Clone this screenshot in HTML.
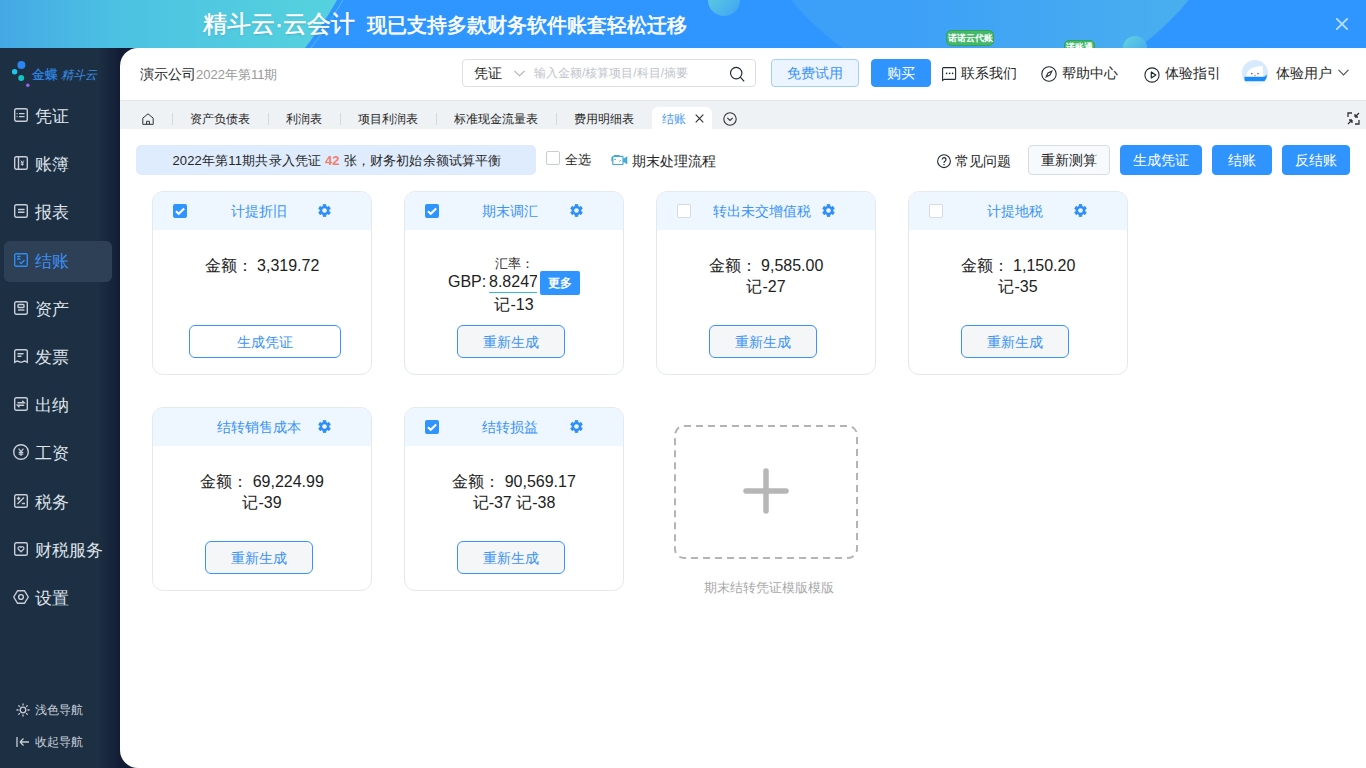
<!DOCTYPE html>
<html><head><meta charset="utf-8">
<style>
*{box-sizing:border-box;margin:0;padding:0}
html,body{width:1366px;height:768px;overflow:hidden;background:#fff;font-family:"Liberation Sans",sans-serif;color:#262626}
.abs{position:absolute}
#banner{left:0;top:0;width:1366px;height:48px;overflow:hidden;background:#3592f7}
#side{left:0;top:48px;width:140px;height:720px;background:linear-gradient(90deg,#1d2f43 0,#1d2f43 98px,#121d35 120px)}
#main{left:120px;top:48px;width:1246px;height:720px;background:#fff;border-radius:18px 0 0 18px;overflow:hidden}
.nav{position:absolute;left:0;width:120px;height:40px;color:#dfe4ea;font-size:17px;line-height:40px}
.nav .t{position:absolute;left:35px;top:1px}
.nav svg{position:absolute;left:14px;top:12px;overflow:visible}
.nav.act{left:4px;width:108px;height:41px;background:#2d4056;border-radius:6px;color:#3d8ff2}
.nav.act .t{left:31px}
.nav.act svg{left:10px}
.bot{position:absolute;left:16px;color:#c9d0d9;font-size:12px;line-height:20px}
.bot .t{position:absolute;left:19px;top:0;white-space:nowrap}
.tab{position:absolute;top:4px;height:28px;line-height:28px;font-size:12px;color:#262626;white-space:nowrap}
.sep{position:absolute;top:12px;width:1px;height:12px;background:#d5d9de}
.btn{position:absolute;height:29px;line-height:27px;font-size:14px;text-align:center;border-radius:4px;white-space:nowrap}
.bblue{background:#3094ff;color:#fff;border:1px solid #3094ff}
.card{position:absolute;width:220px;height:184px;border:1px solid #e4e9ee;border-radius:11px;overflow:hidden;background:#fff}
.card .hd{position:absolute;left:0;top:0;width:218px;height:38px;background:#eef6ff}
.card .title{position:absolute;top:0;height:38px;line-height:38px;font-size:14px;color:#3a93f7;margin-left:1px;white-space:nowrap}
.card .ck{position:absolute;left:20px;top:12px;width:14px;height:14px;border-radius:2px}
.card .ck.on{background:#3094ff}
.card .ck.off{background:#fff;border:1px solid #d6dbe1}
.card .gear{position:absolute;left:165px;top:11.5px}
.card .amt{position:absolute;left:0;width:218px;text-align:center;font-size:16px;color:#222;line-height:21px;white-space:nowrap}
.card .rb{position:absolute;top:133px;height:33px;line-height:33px;border:1px solid #3a93f7;border-radius:6px;color:#3a93f7;font-size:14px;text-align:center;background:#f5f6f8}
</style></head><body>

<!-- Banner -->
<div id="banner" class="abs">
  <svg width="1366" height="48" style="position:absolute;left:0;top:0">
    <defs>
      <linearGradient id="bg1" x1="0" y1="0" x2="1" y2="0">
        <stop offset="0" stop-color="#44a8e4"/>
        <stop offset="0.35" stop-color="#4cc2e2"/>
        <stop offset="1" stop-color="#55d2de"/>
      </linearGradient>
      <linearGradient id="bc" x1="0" y1="0" x2="1" y2="0">
        <stop offset="0.3" stop-color="#3c9ff8"/>
        <stop offset="1" stop-color="#4cb2ec"/>
      </linearGradient>
      <linearGradient id="sc" x1="0" y1="0" x2="1" y2="1">
        <stop offset="0" stop-color="#62d4dd"/>
        <stop offset="1" stop-color="#3fa2f3"/>
      </linearGradient>
    </defs>
    <rect width="1366" height="48" fill="#3096ff"/>
    <circle cx="990" cy="-160" r="255" fill="url(#bc)"/>
    <path d="M0 0 H337 Q323 25 305 48 H0 Z" fill="url(#bg1)"/>
    <path d="M343 0 Q329 25 311 48" stroke="#5cc8ea" stroke-width="1" fill="none" opacity="0.7"/>
    <circle cx="724" cy="0" r="16" fill="url(#sc)"/>
    <circle cx="1135" cy="48" r="12" fill="url(#sc)"/>
  </svg>
  <div class="abs" style="left:203px;top:8px;font-size:24px;line-height:32px;color:#fff;white-space:nowrap;-webkit-text-stroke:0.5px #fff;text-shadow:0 1px 2px rgba(0,60,120,0.25)">精斗云·云会计</div>
  <div class="abs" style="left:367px;top:11px;font-size:20px;line-height:28px;color:#fff;white-space:nowrap;-webkit-text-stroke:0.6px #fff">现已支持多款财务软件账套轻松迁移</div>
  <div class="abs" style="left:946px;top:30px;width:48px;height:16px;background:#44b86a;border:1px solid #34a25a;border-radius:5px;color:#fff;font-size:9px;font-weight:bold;line-height:14px;text-align:center">诺诺云代账</div>
  <div class="abs" style="left:1064px;top:40px;width:31px;height:14px;background:#44b86a;border:1px solid #34a25a;border-radius:5px;color:#fff;font-size:9px;font-weight:bold;line-height:12px;text-align:center">诺账通</div>
  <svg class="abs" style="left:1335px;top:17px" width="14" height="14"><path d="M1.8 1.8L12.2 12.2M12.2 1.8L1.8 12.2" stroke="#b8ddff" stroke-width="1.8" stroke-linecap="round"/></svg>
</div>

<!-- Sidebar -->
<div id="side" class="abs">
  <svg class="abs" style="left:10px;top:8px" width="20" height="32">
    <circle cx="11.4" cy="9" r="4" fill="#2a86f0"/>
    <circle cx="4.6" cy="15.7" r="2.7" fill="#19c7f0"/>
    <circle cx="11.2" cy="22.1" r="3" fill="#13c4c0"/>
    <circle cx="17.8" cy="29.2" r="1.8" fill="#9a62e8"/>
  </svg>
  <div class="nav" style="top:48.0px"><svg width="15" height="15"><rect x="0.7" y="0.7" width="12.6" height="12.6" rx="1.5" stroke="#c9cdd6" stroke-width="1.4" fill="none"/><path d="M2.6 5.6H3.6M5 5.6H10.6M2.6 8.6H3.6M5 8.6H10.6" stroke="#c9cdd6" stroke-width="1.3" fill="none"/></svg><span class="t">凭证</span></div>
  <div class="nav" style="top:96.2px"><svg width="15" height="15"><rect x="0.7" y="0.7" width="12.6" height="12.6" rx="1.5" stroke="#c9cdd6" stroke-width="1.4" fill="none"/><path d="M4.5 1V13" stroke="#c9cdd6" stroke-width="1.4" fill="none"/><path d="M6.8 4.5L8.3 6.5L9.8 4.5M8.3 6.5V9.8M6.8 6.8H9.8M6.8 8.3H9.8" stroke="#c9cdd6" stroke-width="1" fill="none"/></svg><span class="t">账簿</span></div>
  <div class="nav" style="top:144.4px"><svg width="15" height="15"><rect x="0.7" y="0.7" width="12.6" height="12.6" rx="1.5" stroke="#c9cdd6" stroke-width="1.4" fill="none"/><path d="M4 5.5H10.5M4 8.2H10.5" stroke="#c9cdd6" stroke-width="1.4" fill="none"/></svg><span class="t">报表</span></div>
  <div class="nav act" style="top:192.6px"><svg width="15" height="15"><rect x="0.7" y="0.7" width="12.6" height="12.6" rx="1.5" stroke="#2f8cf4" stroke-width="1.4" fill="none"/><path d="M3 3.5H6.5M3 6H6.5M5.5 9L7.2 10.5L10.5 7" stroke="#2f8cf4" stroke-width="1.4" fill="none"/></svg><span class="t">结账</span></div>
  <div class="nav" style="top:240.8px"><svg width="15" height="15"><rect x="0.7" y="0.7" width="12.6" height="12.6" rx="1.5" stroke="#c9cdd6" stroke-width="1.4" fill="none"/><rect x="4" y="3.5" width="6" height="3" rx="0.8" stroke="#c9cdd6" stroke-width="1.4" fill="none"/><path d="M4 9H10.5" stroke="#c9cdd6" stroke-width="1.4" fill="none"/></svg><span class="t">资产</span></div>
  <div class="nav" style="top:289.0px"><svg width="15" height="15"><path d="M0.7 13.3V2.2A1.5 1.5 0 0 1 2.2 0.7H11.8A1.5 1.5 0 0 1 13.3 2.2V13.3L10.8 12L7 13.3L3.2 12Z" stroke="#c9cdd6" stroke-width="1.4" fill="none"/><path d="M3.5 4.8H9.5M3.5 7.3H7.5" stroke="#c9cdd6" stroke-width="1.4" fill="none"/></svg><span class="t">发票</span></div>
  <div class="nav" style="top:337.2px"><svg width="15" height="15"><rect x="0.7" y="0.7" width="12.6" height="12.6" rx="1.5" stroke="#c9cdd6" stroke-width="1.4" fill="none"/><path d="M3.5 5.7H10.2L8.2 3.8M10.2 8.3H3.5L5.5 10.3" stroke="#c9cdd6" stroke-width="1.4" fill="none"/></svg><span class="t">出纳</span></div>
  <div class="nav" style="top:385.4px"><svg width="15" height="15"><circle cx="7" cy="7" r="7.3" stroke="#c9cdd6" stroke-width="1.4" fill="none"/><path d="M4.6 3.6L7 6.6L9.4 3.6M7 6.6V11M4.7 7.3H9.3M4.7 9.1H9.3" stroke="#c9cdd6" stroke-width="1.2" fill="none"/></svg><span class="t">工资</span></div>
  <div class="nav" style="top:433.6px"><svg width="15" height="15"><rect x="0.7" y="0.7" width="12.6" height="12.6" rx="1.5" stroke="#c9cdd6" stroke-width="1.4" fill="none"/><path d="M3.5 10L10 3.5M4.6 2.8V6.2M2.9 4.5H6.3M7.8 9.5H11" stroke="#c9cdd6" stroke-width="1.4" fill="none"/></svg><span class="t">税务</span></div>
  <div class="nav" style="top:481.8px"><svg width="15" height="15"><rect x="0.7" y="0.7" width="12.6" height="12.6" rx="1.5" stroke="#c9cdd6" stroke-width="1.4" fill="none"/><path d="M7 9.8L4.4 7.3A1.6 1.6 0 0 1 7 5.3A1.6 1.6 0 0 1 9.6 7.3Z" stroke="#c9cdd6" stroke-width="1.2" fill="none"/></svg><span class="t">财税服务</span></div>
  <div class="nav" style="top:530.0px"><svg width="15" height="15"><path d="M3.6 0.7H10.4L14.3 7L10.4 13.3H3.6L-0.3 7Z" stroke="#c9cdd6" stroke-width="1.4" fill="none" stroke-linejoin="round"/><circle cx="7" cy="7" r="2.4" stroke="#c9cdd6" stroke-width="1.4" fill="none"/></svg><span class="t">设置</span></div>
  <div class="bot" style="top:652px"><svg class="abs" style="left:0;top:3px" width="14" height="14"><circle cx="7" cy="7" r="2.8" stroke="#c9cdd6" stroke-width="1.3" fill="none"/><path d="M7 0.5V2.5M7 11.5V13.5M0.5 7H2.5M11.5 7H13.5M2.4 2.4L3.8 3.8M10.2 10.2L11.6 11.6M11.6 2.4L10.2 3.8M3.8 10.2L2.4 11.6" stroke="#c9cdd6" stroke-width="1.3"/></svg><span class="t">浅色导航</span></div>
  <div class="bot" style="top:684px"><svg class="abs" style="left:0;top:3px" width="14" height="14"><path d="M1 2V12M4 7H13M4 7L7.5 3.5M4 7L7.5 10.5" stroke="#c9cdd6" stroke-width="1.3" fill="none"/></svg><span class="t">收起导航</span></div>
  <div class="abs" style="left:31.5px;top:16.5px;line-height:18px;color:#2f8ae8;white-space:nowrap"><span style="font-size:13px;-webkit-text-stroke:0.2px #2f8ae8">金蝶</span><span style="display:inline-block;width:3px"></span><span style="font-size:12px;font-style:italic;color:#3a8fe6">精斗云</span></div>
</div>


<!-- Main -->
<div id="main" class="abs">
  <!-- header -->
  <div class="abs" style="left:20px;top:15px;font-size:14px;line-height:22px;color:#262626;white-space:nowrap">演示公司<span style="font-size:13px;color:#999">2022年第11期</span></div>
  <div class="abs" style="left:342px;top:11px;width:294px;height:28px;border:1px solid #dcdfe6;border-radius:4px;background:#fff">
    <div class="abs" style="left:11px;top:3px;font-size:14px;line-height:20px;color:#262626">凭证</div>
    <svg class="abs" style="left:51px;top:10px" width="11" height="7"><path d="M0.5 0.8L5.5 5.8L10.5 0.8" stroke="#a8abb2" stroke-width="1.1" fill="none"/></svg>
    <div class="abs" style="left:71px;top:4px;font-size:12px;line-height:18px;color:#c0c4cc;white-space:nowrap">输入金额/核算项目/科目/摘要</div>
    <svg class="abs" style="left:266px;top:6px" width="17" height="17"><circle cx="7.2" cy="7.1" r="5.7" stroke="#1f2a33" stroke-width="1.15" fill="none"/><path d="M11.3 11.2L15.2 15.3" stroke="#1f2a33" stroke-width="1.2"/></svg>
  </div>
  <div class="btn abs" style="left:651px;top:11px;width:88px;height:28px;line-height:26px;background:#ebf4ff;border:1px solid #a3cdfb;color:#3a93f7">免费试用</div>
  <div class="btn bblue abs" style="left:751px;top:11px;width:60px;height:28px;line-height:26px">购买</div>
  <svg class="abs" style="left:822px;top:19px" width="15" height="15"><path d="M0.6 13.4V1.6A1 1 0 0 1 1.6 0.6H12.6A1 1 0 0 1 13.6 1.6V11.4A1 1 0 0 1 12.6 12.4H2.2Z" stroke="#1f2a33" stroke-width="1.1" fill="none"/><circle cx="4.6" cy="6.3" r="0.85" fill="#1f2a33"/><circle cx="7.6" cy="6.3" r="0.85" fill="#1f2a33"/><circle cx="10.6" cy="6.3" r="0.85" fill="#1f2a33"/></svg>
  <div class="abs" style="left:841px;top:14px;font-size:14px;line-height:22px;color:#262626;white-space:nowrap">联系我们</div>
  <svg class="abs" style="left:921px;top:18px" width="16" height="16"><circle cx="8" cy="8" r="7.2" stroke="#1f2a33" stroke-width="1.1" fill="none"/><path d="M10.8 5.2L9 9L5.2 10.8L7 7Z" stroke="#333" stroke-width="1.1" fill="none"/></svg>
  <div class="abs" style="left:942px;top:14px;font-size:14px;line-height:22px;color:#262626;white-space:nowrap">帮助中心</div>
  <svg class="abs" style="left:1023.5px;top:18.5px" width="16" height="16"><circle cx="8" cy="8" r="7.1" stroke="#1f2a33" stroke-width="1.1" fill="none"/><path d="M7.3 5V11L11.8 8Z" stroke="#1f2a33" stroke-width="1.2" fill="none" stroke-linejoin="round"/></svg>
  <div class="abs" style="left:1045px;top:14px;font-size:14px;line-height:22px;color:#262626;white-space:nowrap">体验指引</div>
  <svg class="abs" style="left:1122px;top:12px" width="26" height="26"><defs><clipPath id="av"><circle cx="13" cy="13" r="13"/></clipPath></defs><g clip-path="url(#av)"><rect width="26" height="26" fill="#d6e9fd"/><rect y="19" width="26" height="7" fill="#f4f9ff"/><path d="M3.8 19Q4.5 8 13.5 7L20.5 5.8Q21 12 21.5 19Z" fill="#fff"/><path d="M2.5 16.8H22.3L24.8 14.5L24.5 18L22.5 21.2H2.5Z" fill="#1a8cf5"/></g><circle cx="9.8" cy="13.6" r="0.9" fill="#777"/><circle cx="16" cy="13.6" r="0.9" fill="#777"/><circle cx="13" cy="15.6" r="0.8" fill="#f77"/></svg>
  <div class="abs" style="left:1156px;top:14px;font-size:14px;line-height:22px;color:#262626;white-space:nowrap">体验用户</div>
  <svg class="abs" style="left:1218px;top:21px" width="11" height="7"><path d="M0.5 0.8L5.5 5.8L10.5 0.8" stroke="#555" stroke-width="1.2" fill="none"/></svg>

  <!-- tabs -->
  <div class="abs" style="left:0;top:52px;width:1246px;height:29px;background:#eef2f5;border-top:1px solid #e3e7ea">
    <svg class="abs" style="left:22px;top:12px" width="12" height="12"><path d="M0.8 5.2L6 0.8L11.2 5.2V11.3H0.8Z" stroke="#333" stroke-width="1" fill="none" stroke-linejoin="round"/><path d="M4.6 11.3V8.3H7.4V11.3" stroke="#333" stroke-width="1" fill="none"/></svg>
    <div class="sep" style="left:52px"></div>
    <div class="tab" style="left:70px">资产负债表</div>
    <div class="sep" style="left:148px"></div>
    <div class="tab" style="left:166px">利润表</div>
    <div class="sep" style="left:220px"></div>
    <div class="tab" style="left:238px">项目利润表</div>
    <div class="sep" style="left:316px"></div>
    <div class="tab" style="left:334px">标准现金流量表</div>
    <div class="sep" style="left:436px"></div>
    <div class="tab" style="left:454px">费用明细表</div>
    <div class="abs" style="left:532px;top:6px;width:60px;height:23px;background:#fff;border-radius:6px 6px 0 0">
      <div class="abs" style="left:10px;top:0.5px;font-size:12px;line-height:22px;color:#4a98f3">结账</div>
      <svg class="abs" style="left:43px;top:7px" width="9" height="9"><path d="M0.7 0.7L8.3 8.3M8.3 0.7L0.7 8.3" stroke="#333" stroke-width="1.2"/></svg>
    </div>
    <svg class="abs" style="left:603px;top:11px" width="14" height="14"><circle cx="7" cy="7" r="6.2" stroke="#333" stroke-width="1.1" fill="none"/><path d="M4.3 5.8L7 8.5L9.7 5.8" stroke="#333" stroke-width="1.1" fill="none"/></svg>
    <svg class="abs" style="left:1227px;top:11px" width="13" height="13"><path d="M1 5V1H5M8 5L12 1M8 5V2M8 5H11M12 8V12H8M5 8L1 12M5 8V11M5 8H2" stroke="#333" stroke-width="1.3" fill="none"/></svg>
  </div>

  <!-- toolbar -->
  <div class="abs" style="left:16px;top:97px;width:400px;height:30px;background:#deedfd;border-radius:5px;font-size:13px;line-height:32px;color:#262626;text-align:center;white-space:nowrap;letter-spacing:0.17px;background:#deecfe;padding-left:2px">2022年第11期共录入凭证 <span style="color:#f27f6b;font-weight:bold">42</span> 张，财务初始余额试算平衡</div>
  <div class="abs" style="left:426px;top:103px;width:14px;height:14px;border:1px solid #c8cdd4;border-radius:2px;background:#fff"></div>
  <div class="abs" style="left:445px;top:103px;font-size:13px;line-height:18px;color:#262626">全选</div>
  <svg class="abs" style="left:491px;top:106px" width="17" height="12"><rect x="1.8" y="2.3" width="10.2" height="8.2" rx="0.6" stroke="#43aad9" stroke-width="1.2" fill="#fff"/><rect x="0.3" y="3.2" width="1.6" height="4" fill="#43aad9"/><rect x="3" y="1" width="5.6" height="1.5" fill="#43aad9"/><path d="M12 5L16.3 2.2V10.4L12 7.6Z" fill="#43aad9"/><path d="M3.2 5.4H4.9M8.3 7.6Q9.4 7.3 9.5 6.2" stroke="#43aad9" stroke-width="1" fill="none"/></svg>
  <div class="abs" style="left:512px;top:103px;font-size:14px;line-height:20px;color:#262626;white-space:nowrap">期末处理流程</div>
  <svg class="abs" style="left:816.5px;top:105.5px" width="15" height="15"><circle cx="7" cy="7.2" r="6.4" stroke="#1f2a33" stroke-width="1.1" fill="none"/><path d="M5.2 5.6A1.9 1.9 0 1 1 8.2 7.1Q7 7.8 7 9" stroke="#1f2a33" stroke-width="1.2" fill="none"/><rect x="6.35" y="10" width="1.3" height="1.2" fill="#1f2a33"/></svg>
  <div class="abs" style="left:835px;top:103px;font-size:14px;line-height:20px;color:#262626;white-space:nowrap">常见问题</div>
  <div class="btn abs" style="left:908px;top:97px;width:82px;height:30px;line-height:28px;background:#f7fafd;border:1px solid #d7dde5;color:#262626">重新测算</div>
  <div class="btn bblue abs" style="left:1000px;top:97px;width:82px;height:30px;line-height:28px">生成凭证</div>
  <div class="btn bblue abs" style="left:1092px;top:97px;width:60px;height:30px;line-height:28px">结账</div>
  <div class="btn bblue abs" style="left:1162px;top:97px;width:68px;height:30px;line-height:28px">反结账</div>
  <div class="card" style="left:32px;top:143px">
    <div class="hd"></div>
    <div class="ck on"><svg width="14" height="14"><path d="M3 7.3L5.7 9.8L11.2 4.4" stroke="#fff" stroke-width="2.1" fill="none"/></svg></div>
    <div class="title" style="left:77px">计提折旧</div>
    <svg class="gear" width="13" height="13" viewBox="0 0 14 14"><path d="M5.57 2.31 L5.52 0.57 L8.48 0.57 L8.43 2.31 L10.34 3.42 L11.83 2.50 L13.31 5.07 L11.77 5.90 L11.77 8.10 L13.31 8.93 L11.83 11.50 L10.34 10.58 L8.43 11.69 L8.48 13.43 L5.52 13.43 L5.57 11.69 L3.66 10.58 L2.17 11.50 L0.69 8.93 L2.23 8.10 L2.23 5.90 L0.69 5.07 L2.17 2.50 L3.66 3.42Z" fill="#2d8ef7" stroke="#2d8ef7" stroke-width="0.8" stroke-linejoin="round"/><circle cx="7" cy="7" r="2.5" fill="#eef6ff"/></svg>
    <div class="amt" style="top:63px">金额：&nbsp;3,319.72</div>
    <div class="rb" style="left:36px;width:152px;background:#fff">生成凭证</div>
  </div>
  <div class="card" style="left:284px;top:143px">
    <div class="hd"></div>
    <div class="ck on"><svg width="14" height="14"><path d="M3 7.3L5.7 9.8L11.2 4.4" stroke="#fff" stroke-width="2.1" fill="none"/></svg></div>
    <div class="title" style="left:76px">期末调汇</div>
    <svg class="gear" width="13" height="13" viewBox="0 0 14 14"><path d="M5.57 2.31 L5.52 0.57 L8.48 0.57 L8.43 2.31 L10.34 3.42 L11.83 2.50 L13.31 5.07 L11.77 5.90 L11.77 8.10 L13.31 8.93 L11.83 11.50 L10.34 10.58 L8.43 11.69 L8.48 13.43 L5.52 13.43 L5.57 11.69 L3.66 10.58 L2.17 11.50 L0.69 8.93 L2.23 8.10 L2.23 5.90 L0.69 5.07 L2.17 2.50 L3.66 3.42Z" fill="#2d8ef7" stroke="#2d8ef7" stroke-width="0.8" stroke-linejoin="round"/><circle cx="7" cy="7" r="2.5" fill="#eef6ff"/></svg>
    <div class="amt" style="top:63px;font-size:13px;line-height:17px">汇率：</div>
    <div class="abs" style="left:43px;top:79px;font-size:16px;line-height:22px;color:#222;white-space:nowrap">GBP: </div>
    <div class="abs" style="left:84px;top:79px;width:48px;height:22px;overflow:hidden;border-bottom:1px solid #3cb4e4;font-size:16px;line-height:22px;color:#222;white-space:nowrap">8.8247</div>
    <div class="abs" style="left:135px;top:79px;width:40px;height:24px;background:#3094ff;border-radius:2px;color:#fff;font-size:12px;font-weight:bold;line-height:24px;text-align:center">更多</div>
    <div class="amt" style="top:102px">记-13</div>
    <div class="rb" style="left:52px;width:108px;">重新生成</div>
  </div>
  <div class="card" style="left:536px;top:143px">
    <div class="hd"></div>
    <div class="ck off"></div>
    <div class="title" style="left:55px">转出未交增值税</div>
    <svg class="gear" width="13" height="13" viewBox="0 0 14 14"><path d="M5.57 2.31 L5.52 0.57 L8.48 0.57 L8.43 2.31 L10.34 3.42 L11.83 2.50 L13.31 5.07 L11.77 5.90 L11.77 8.10 L13.31 8.93 L11.83 11.50 L10.34 10.58 L8.43 11.69 L8.48 13.43 L5.52 13.43 L5.57 11.69 L3.66 10.58 L2.17 11.50 L0.69 8.93 L2.23 8.10 L2.23 5.90 L0.69 5.07 L2.17 2.50 L3.66 3.42Z" fill="#2d8ef7" stroke="#2d8ef7" stroke-width="0.8" stroke-linejoin="round"/><circle cx="7" cy="7" r="2.5" fill="#eef6ff"/></svg>
    <div class="amt" style="top:63px">金额：&nbsp;9,585.00</div>
    <div class="amt" style="top:84px">记-27</div>
    <div class="rb" style="left:52px;width:108px;">重新生成</div>
  </div>
  <div class="card" style="left:788px;top:143px">
    <div class="hd"></div>
    <div class="ck off"></div>
    <div class="title" style="left:77px">计提地税</div>
    <svg class="gear" width="13" height="13" viewBox="0 0 14 14"><path d="M5.57 2.31 L5.52 0.57 L8.48 0.57 L8.43 2.31 L10.34 3.42 L11.83 2.50 L13.31 5.07 L11.77 5.90 L11.77 8.10 L13.31 8.93 L11.83 11.50 L10.34 10.58 L8.43 11.69 L8.48 13.43 L5.52 13.43 L5.57 11.69 L3.66 10.58 L2.17 11.50 L0.69 8.93 L2.23 8.10 L2.23 5.90 L0.69 5.07 L2.17 2.50 L3.66 3.42Z" fill="#2d8ef7" stroke="#2d8ef7" stroke-width="0.8" stroke-linejoin="round"/><circle cx="7" cy="7" r="2.5" fill="#eef6ff"/></svg>
    <div class="amt" style="top:63px">金额：&nbsp;1,150.20</div>
    <div class="amt" style="top:84px">记-35</div>
    <div class="rb" style="left:52px;width:108px;">重新生成</div>
  </div>
  <div class="card" style="left:32px;top:359px">
    <div class="hd"></div>
    
    <div class="title" style="left:63px">结转销售成本</div>
    <svg class="gear" width="13" height="13" viewBox="0 0 14 14"><path d="M5.57 2.31 L5.52 0.57 L8.48 0.57 L8.43 2.31 L10.34 3.42 L11.83 2.50 L13.31 5.07 L11.77 5.90 L11.77 8.10 L13.31 8.93 L11.83 11.50 L10.34 10.58 L8.43 11.69 L8.48 13.43 L5.52 13.43 L5.57 11.69 L3.66 10.58 L2.17 11.50 L0.69 8.93 L2.23 8.10 L2.23 5.90 L0.69 5.07 L2.17 2.50 L3.66 3.42Z" fill="#2d8ef7" stroke="#2d8ef7" stroke-width="0.8" stroke-linejoin="round"/><circle cx="7" cy="7" r="2.5" fill="#eef6ff"/></svg>
    <div class="amt" style="top:63px">金额：&nbsp;69,224.99</div>
    <div class="amt" style="top:84px">记-39</div>
    <div class="rb" style="left:52px;width:108px;">重新生成</div>
  </div>
  <div class="card" style="left:284px;top:359px">
    <div class="hd"></div>
    <div class="ck on"><svg width="14" height="14"><path d="M3 7.3L5.7 9.8L11.2 4.4" stroke="#fff" stroke-width="2.1" fill="none"/></svg></div>
    <div class="title" style="left:76px">结转损益</div>
    <svg class="gear" width="13" height="13" viewBox="0 0 14 14"><path d="M5.57 2.31 L5.52 0.57 L8.48 0.57 L8.43 2.31 L10.34 3.42 L11.83 2.50 L13.31 5.07 L11.77 5.90 L11.77 8.10 L13.31 8.93 L11.83 11.50 L10.34 10.58 L8.43 11.69 L8.48 13.43 L5.52 13.43 L5.57 11.69 L3.66 10.58 L2.17 11.50 L0.69 8.93 L2.23 8.10 L2.23 5.90 L0.69 5.07 L2.17 2.50 L3.66 3.42Z" fill="#2d8ef7" stroke="#2d8ef7" stroke-width="0.8" stroke-linejoin="round"/><circle cx="7" cy="7" r="2.5" fill="#eef6ff"/></svg>
    <div class="amt" style="top:63px">金额：&nbsp;90,569.17</div>
    <div class="amt" style="top:84px">记-37 记-38</div>
    <div class="rb" style="left:52px;width:108px;">重新生成</div>
  </div>
  <svg class="abs" style="left:554px;top:377px" width="184" height="134"><rect x="1" y="1" width="182" height="132" rx="9" stroke="#b4b4b4" stroke-width="2" stroke-dasharray="7 5" fill="none"/><path d="M72 66H112M92 46V86" stroke="#b6b6b6" stroke-width="5.5" stroke-linecap="round"/></svg>
  <div class="abs" style="left:556px;top:530px;width:186px;text-align:center;font-size:13px;line-height:20px;color:#a8a8a8">期末结转凭证模版模版</div>
</div>

</body></html>
